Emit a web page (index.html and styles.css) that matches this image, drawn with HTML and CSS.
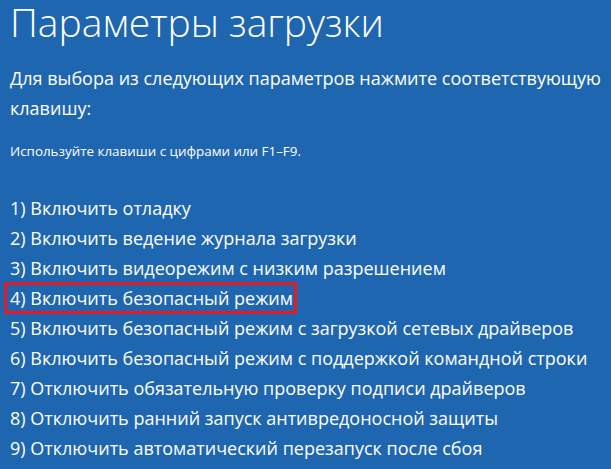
FILE: index.html
```html
<html>
<head>
    <title>Параметры загрузки</title>
    <link rel="stylesheet" href="styles.css">
</head>
<body>
    <div class="screen">
        <h1 class="title">Параметры загрузки</h1>
        <p class="lead">Для выбора из следующих параметров нажмите соответствующую клавишу:</p>
        <p class="hint">Используйте клавиши с цифрами или F1–F9.</p>
        <ul class="options">
            <li>1) Включить отладку</li>
            <li>2) Включить ведение журнала загрузки</li>
            <li>3) Включить видеорежим с низким разрешением</li>
            <li class="selected">4) Включить безопасный режим</li>
            <li>5) Включить безопасный режим с загрузкой сетевых драйверов</li>
            <li>6) Включить безопасный режим с поддержкой командной строки</li>
            <li>7) Отключить обязательную проверку подписи драйверов</li>
            <li>8) Отключить ранний запуск антивредоносной защиты</li>
            <li>9) Отключить автоматический перезапуск после сбоя</li>
        </ul>
    </div>
</body>
</html>
```

FILE: styles.css
```css
body {
    margin: 0;
    background-color: #1f66b1;
    color: #ffffff;
    font-family: "Open Sans", "Noto Sans", sans-serif;
}

.screen {
    padding: 0 0 0 10px;
    height: 469px;
    overflow: hidden;
}

.title {
    margin: 0;
    font-size: 39px;
    font-weight: 300;
    line-height: 44px;
}

.lead {
    margin: 19px 0 0 0;
    font-size: 18px;
    line-height: 30px;
    width: 600px;
}

.hint {
    margin: 18px 0 0 0;
    font-size: 13.4px;
    line-height: 20px;
}

.options {
    list-style: none;
    margin: 32px 0 0 0;
    padding: 0;
    font-size: 18px;
    line-height: 30px;
}

.options li {
    white-space: nowrap;
}

.selected {
    margin: -1px 0 -1px -6px;
    padding-left: 3px;
    width: 284px;
    height: 26px;
    line-height: 26px;
    border: 3px solid #e51a23;
}
```
